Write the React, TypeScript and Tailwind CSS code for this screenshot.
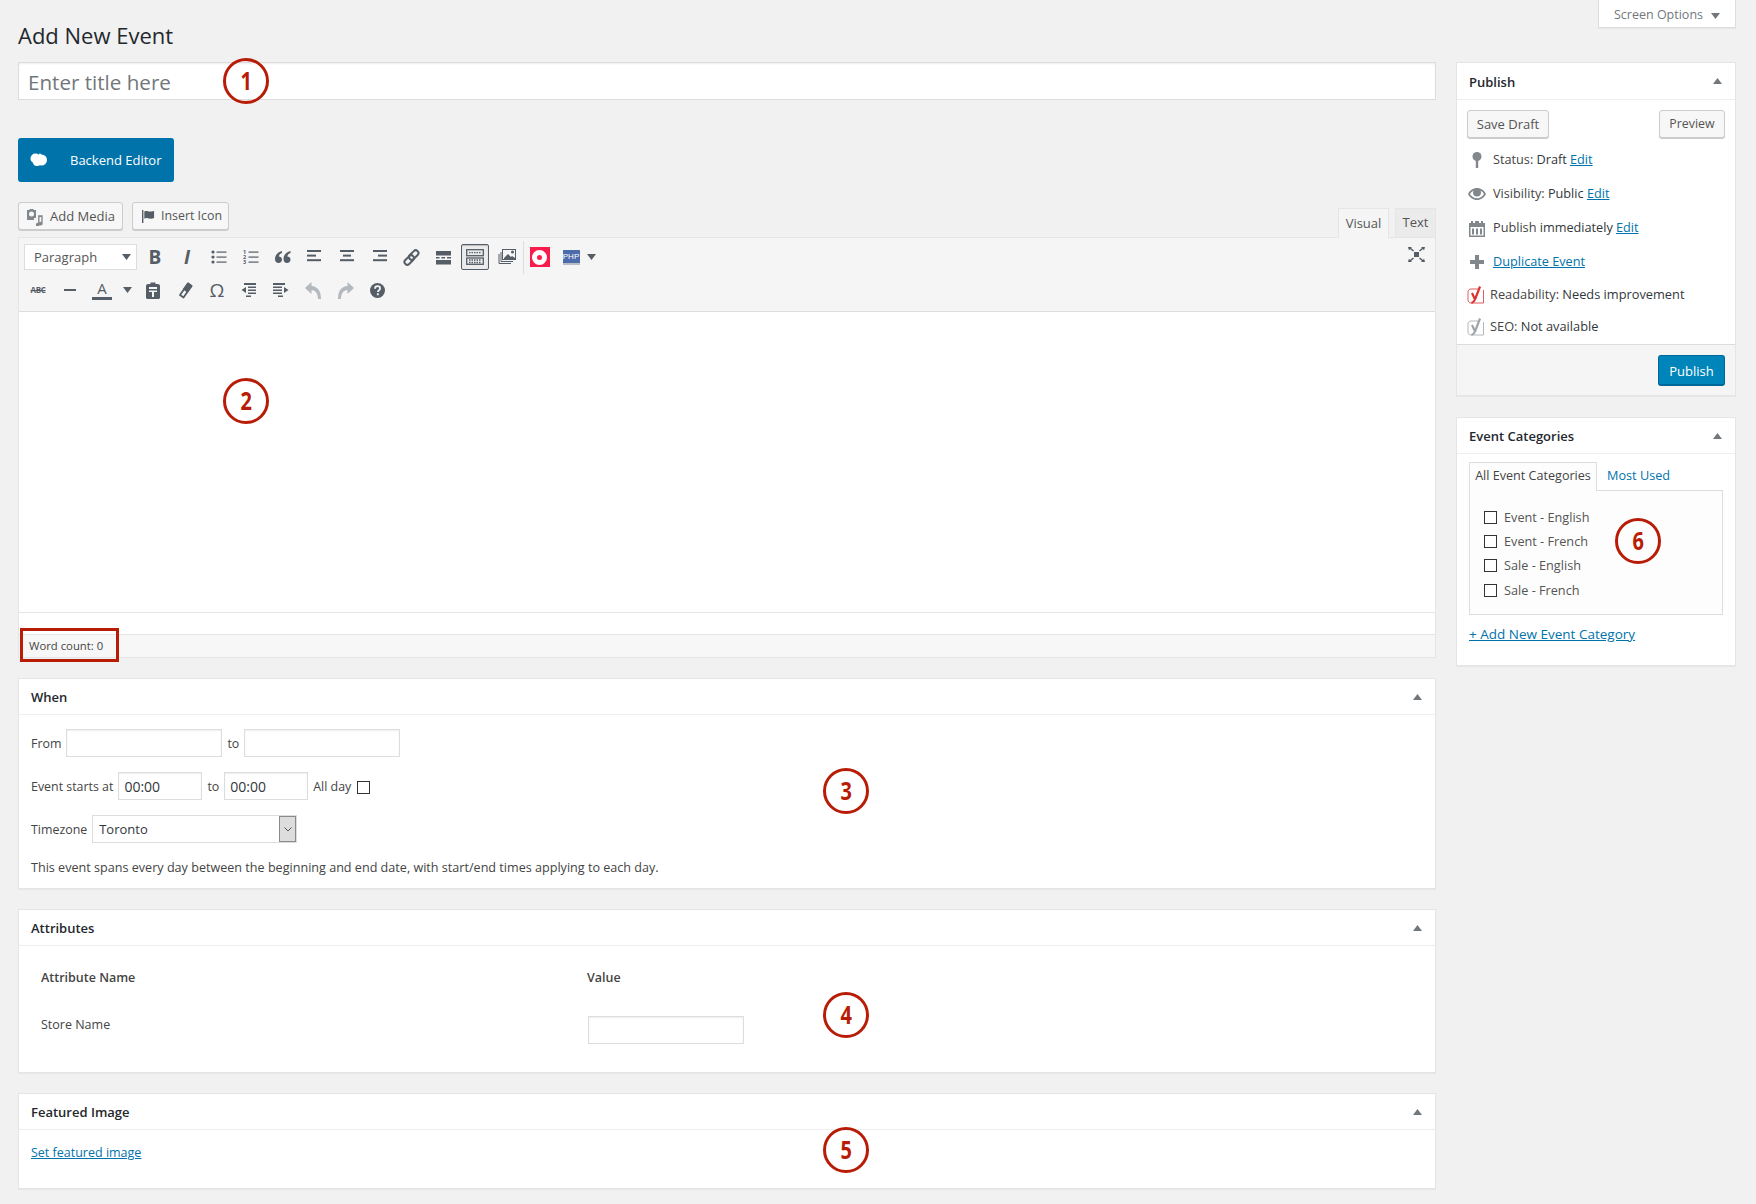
import React from 'react';

const Triangle = ({ down = false, className = 'text-[#72777c]' }: { down?: boolean; className?: string }) => (
  <svg width="9" height="6" viewBox="0 0 9 6" className={className}>
    <polygon points={down ? '0,0 9,0 4.5,6' : '0,6 9,6 4.5,0'} fill="currentColor" />
  </svg>
);

const Tb = ({ w = 'w-[32px]', children }: { w?: string; children: React.ReactNode }) => (
  <div className={`${w} h-[26px] flex items-center justify-center text-[#555d66] shrink-0`}>{children}</div>
);

const Bars = ({ rows }: { rows: [number, number][] }) => (
  <svg width="16" height="16" viewBox="0 0 16 16" fill="currentColor">
    {rows.map(([x, w], i) => (
      <rect key={i} x={x} y={1 + i * 4.6} width={w} height="2" />
    ))}
  </svg>
);

const ListIcon = () => (
  <svg width="16" height="16" viewBox="0 0 16 16" fill="currentColor">
    {[2, 7, 12].map((y) => (
      <g key={y}>
        <circle cx="2" cy={y + 1} r="1.6" />
        <rect x="5.5" y={y + 0.5} width="10" height="1.2" />
      </g>
    ))}
  </svg>
);

const NumList = () => (
  <svg width="16" height="16" viewBox="0 0 16 16" fill="currentColor">
    {[1, 2, 3].map((n) => (
      <g key={n}>
        <text x="0" y={n * 5 - 0.5} fontSize="5.500" fontWeight="700">{n}</text>
        <rect x="5.5" y={n * 5 - 2.5} width="10" height="1.2" />
      </g>
    ))}
  </svg>
);

const Quote = () => (
  <svg width="16" height="14" viewBox="0 0 16 14" fill="currentColor">
    <path d="M7 1C3 2 0 5 0 9c0 2.500 1.500 4 3.500 4S7 11.500 7 9.500 5.500 6.500 3.800 6.500C4 4.800 5.400 3.400 7 3zM15.500 1c-4 1-7 4-7 8 0 2.500 1.500 4 3.500 4s3.500-1.500 3.500-3.500-1.500-3-3.200-3c.2-1.700 1.600-3.100 3.200-3.500z" />
  </svg>
);

const LinkIcon = () => (
  <svg width="17" height="17" viewBox="0 0 17 17" fill="none" stroke="currentColor" strokeWidth="2">
    <rect x="8" y="0.500" width="5.500" height="11" rx="2.700" transform="rotate(45 10.700 6)" />
    <rect x="3.500" y="5.500" width="5.500" height="11" rx="2.700" transform="rotate(45 6.200 11)" />
  </svg>
);

const MoreIcon = () => (
  <svg width="15" height="15" viewBox="0 0 15 15" fill="currentColor">
    <rect x="0" y="1" width="15" height="4.500" />
    <rect x="0" y="7" width="3.500" height="1.500" />
    <rect x="5.500" y="7" width="3.500" height="1.500" />
    <rect x="11" y="7" width="4" height="1.500" />
    <rect x="0" y="10" width="15" height="4.500" />
  </svg>
);

const KitchenSink = () => (
  <svg width="18" height="16" viewBox="0 0 18 16" fill="none" stroke="currentColor" strokeWidth="1.300">
    <rect x="0.700" y="0.700" width="16.600" height="6" />
    <rect x="0.700" y="9" width="16.600" height="6.300" />
    <path d="M3 3.700h12M3 11h12M3 13.500h12" strokeDasharray="1.500 1" />
  </svg>
);

const MediaIcon = () => (
  <svg width="18" height="17" viewBox="0 0 18 17" fill="none" stroke="currentColor" strokeWidth="1">
    <rect x="4.500" y="0.500" width="13" height="10" />
    <path d="M3 3v9.500h12M1 5v9.500h12" />
    <path d="M6 9l4-4 3 3 1-1 3 2v1H6z" fill="currentColor" stroke="none" />
    <circle cx="14.500" cy="3" r="1.500" fill="currentColor" stroke="none" />
  </svg>
);

const Clipboard = () => (
  <svg width="16" height="17" viewBox="0 0 16 17" fill="currentColor">
    <path d="M5.500 2V.500h5V2H13c1 0 2 .8 2 2v11.500c0 .8-.7 1.500-1.500 1.500h-11C1.700 17 1 16.300 1 15.500V4c0-1.200 1-2 2-2zM4 5v2h8V5zm0 3.500v1.500h3v5h2v-5h3V8.500z" />
  </svg>
);

const Eraser = () => (
  <svg width="15" height="17" viewBox="0 0 15 17" fill="none" stroke="currentColor" strokeWidth="1.800" strokeLinejoin="round">
    <path d="M10 1.500l3.500 2.500-8 11.500L2 13z" />
    <path d="M10 1.500l3.500 2.500-4 5.500-3.500-2.500z" fill="currentColor" />
  </svg>
);

const Indent = ({ out = false }: { out?: boolean }) => (
  <svg width="16" height="16" viewBox="0 0 16 16" fill="currentColor">
    {out ? (
      <>
        <rect x="3" y="1" width="12" height="2" />
        <rect x="7" y="4.500" width="8" height="1.500" />
        <rect x="7" y="7.500" width="8" height="1.500" />
        <rect x="7" y="10.500" width="8" height="1.500" />
        <rect x="5" y="13.500" width="5" height="1.500" />
        <polygon points="5,5 5,11 0.500,8" />
      </>
    ) : (
      <>
        <rect x="0" y="1" width="12" height="2" />
        <rect x="0" y="4.500" width="9" height="1.500" />
        <rect x="0" y="7.500" width="9" height="1.500" />
        <rect x="0" y="10.500" width="9" height="1.500" />
        <rect x="5" y="13.500" width="5" height="1.500" />
        <polygon points="11,5 11,11 15.500,8" />
      </>
    )}
  </svg>
);

const UndoIcon = ({ flip = false }: { flip?: boolean }) => (
  <svg width="17" height="17" viewBox="0 0 17 17" fill="#b4b9be" className={flip ? '-scale-x-100' : ''}>
    <path d="M6.500 0v4C12 4.500 16 8 16 17h-3c0-6-2.500-8.500-6.500-9v4L0 6z" />
  </svg>
);

const Help = () => (
  <svg width="15" height="15" viewBox="0 0 15 15">
    <circle cx="7.500" cy="7.500" r="7.500" fill="currentColor" />
    <path d="M5 5.700c0-1.500 1.100-2.500 2.600-2.500s2.500.9 2.500 2.200c0 1.900-2.200 1.900-2.200 3.700" fill="none" stroke="#f5f5f5" strokeWidth="1.800" />
    <rect x="6.900" y="10.300" width="1.900" height="1.900" fill="#f5f5f5" />
  </svg>
);

const Expand = () => (
  <svg width="17" height="15" viewBox="0 0 17 15" fill="currentColor">
    <rect x="6" y="5" width="5" height="5" />
    <path d="M0 0h4L3 1l3 2.500-1 1L2 2 1 3.500zM17 0h-4l1 1-3 2.500 1 1L15 2l1 1.500zM0 15h4l-1-1 3-2.500-1-1L2 13l-1-1.500zM17 15h-4l1-1-3-2.500 1-1 3 2.500 1-1.500z" />
  </svg>
);

const YoastIcon = ({ color, box }: { color: string; box: string }) => (
  <svg width="18" height="19" viewBox="0 0 18 19" fill="none">
    <path d="M11 3H4C2.300 3 1 4.300 1 6v8c0 1.700 1.300 3 3 3h12.500V4" stroke={box} strokeWidth="1" opacity="0.800" />
    <path d="M5 7l3 6.500M13 0.500L8 13.500C7.300 15.500 6.300 16.500 4.500 17" stroke={color} strokeWidth="2.200" />
  </svg>
);

const PinIcon = () => (
  <svg width="10" height="16" viewBox="0 0 10 16" fill="#82878c">
    <circle cx="5" cy="4.500" r="4.500" />
    <rect x="3.800" y="8" width="2.400" height="8" />
  </svg>
);

const EyeIcon = () => (
  <svg width="18" height="12" viewBox="0 0 18 12" fill="#82878c">
    <path fillRule="evenodd" d="M9 0c4 0 7.300 2.400 9 6-1.700 3.600-5 6-9 6S1.700 9.600 0 6c1.700-3.600 5-6 9-6zM2 6c1.500 2.600 4 4.300 7 4.300s5.500-1.700 7-4.300c-.9-1.500-2.100-2.700-3.600-3.500.4.600.6 1.300.6 2a4 4 0 0 1-8 0c0-.7.200-1.400.6-2C4.100 3.300 2.900 4.500 2 6z" />
  </svg>
);

const CalendarIcon = () => (
  <svg width="16" height="17" viewBox="0 0 16 17" fill="#82878c">
    <path fillRule="evenodd" d="M2 1h2v2h2V1h4v2h2V1h2v2h2v14H0V3h2zM1.500 7v8.500h13V7zM3 8.500h2v6H3zm4 0h2v6H7zm4 0h2v6h-2z" />
  </svg>
);

const PlusIcon = () => (
  <svg width="14" height="14" viewBox="0 0 14 14" fill="#82878c">
    <rect x="5" y="0" width="4" height="14" />
    <rect x="0" y="5" width="14" height="4" />
  </svg>
);

const AddMediaIcon = () => (
  <svg width="18" height="18" viewBox="0 0 18 18" fill="#82878c" className="shrink-0">
    <path fillRule="evenodd" d="M1 2h2l1-1h3l1 1h2v8H8v2H1zM5.500 3.500a2.500 2.500 0 1 0 0 5 2.500 2.500 0 0 0 0-5z" />
    <path d="M12 6h5v9.500a2 2 0 1 1-1.500-2V8h-2v8.500a2 2 0 1 1-1.500-2z" transform="scale(0.900) translate(1.500 2)" />
  </svg>
);

const FlagIcon = () => (
  <svg width="13" height="13" viewBox="0 0 14 14" fill="#555d66" className="shrink-0">
    <rect x="0" y="0" width="1.500" height="14" />
    <path d="M2.500 1.500c3-1.500 4.500 1 7.500 0 1-.3 2-.5 3-.5v7.500c-3 1.500-5 .5-7 .3-1.300-.2-2.500 0-3.500.7z" />
  </svg>
);

const BlobIcon = () => (
  <svg width="17" height="14" viewBox="0 0 17 14" fill="#fff">
    <circle cx="5.500" cy="5.500" r="5" />
    <circle cx="11.500" cy="7" r="5.500" />
    <circle cx="7" cy="9" r="4" />
    <circle cx="10" cy="2" r="1.500" />
  </svg>
);

const Box = ({ title, bodyClass, children }: { title: string; bodyClass: string; children: React.ReactNode }) => (
  <div className="bg-white border border-[#e5e5e5] shadow-[0_1px_1px_rgba(0,0,0,0.04)]">
    <div className="h-[35px] border-b border-[#eeeeee] box-content flex items-center justify-between pl-[12px] pr-[13px]">
      <h2 className="text-[13px] font-semibold text-[#23282d] pt-[3px]">{title}</h2>
      <Triangle />
    </div>
    <div className={bodyClass}>{children}</div>
  </div>
);

const Label = ({ children }: { children: React.ReactNode }) => <span className="pt-[2px]">{children}</span>;

const fieldClass = 'h-[28px] border border-[#dddddd] bg-white shadow-[inset_0_1px_2px_rgba(0,0,0,0.07)] text-[14px] text-[#32373c] px-[5px] pt-[1px] outline-none';
const buttonClass = 'h-[28px] px-[9px] pt-px border border-[#cccccc] rounded-[3px] bg-[#f7f7f7] shadow-[0_1px_0_#cccccc] text-[#555555] flex items-center whitespace-nowrap';
const linkClass = 'text-[#0073aa] underline';

const Badge = ({ n, className }: { n: number; className: string }) => (
  <div className={`absolute w-[46px] h-[46px] rounded-full border-[3px] border-[#b81c06] flex items-center justify-center text-[#b81c06] text-[25px] font-bold ${className}`}>
    <span className="inline-block scale-x-[0.8]">{n}</span>
  </div>
);

const StatusRow = ({ icon, children }: { icon: React.ReactNode; children: React.ReactNode }) => (
  <div className="h-[34px] flex items-center text-[12.7px] text-[#444444]">
    <div className="w-[26px] flex justify-center pr-[7px] shrink-0">{icon}</div>
    {children}
  </div>
);

const YoastRow = ({ icon, children }: { icon: React.ReactNode; children: React.ReactNode }) => (
  <div className="h-[32px] flex items-center text-[12.8px] text-[#444444]">
    <div className="w-[23px] flex justify-start shrink-0">{icon}</div>
    {children}
  </div>
);

const App: React.FC = () => {
  return (
    <div className="relative min-h-[1204px] bg-[#f1f1f1] font-['Open_Sans',sans-serif] text-[12.7px] text-[#444444] flex">
      {/* Main column */}
      <main className="w-[1418px] ml-[18px] shrink-0">
        <h1 className="mt-[20px] h-[30px] leading-[30px] text-[22px] text-[#23282d]">Add New Event</h1>
        <input
          placeholder="Enter title here"
          className="mt-[12px] w-full h-[38px] border border-[#dddddd] bg-white px-[9px] pt-[2px] text-[20.6px] outline-none placeholder:text-[#72777c] shadow-[inset_0_1px_2px_rgba(0,0,0,0.07)]"
        />
        <button className="mt-[38px] w-[156px] h-[44px] rounded-[3px] bg-[#0073aa] text-white text-[13px] flex items-center pl-[12px]">
          <BlobIcon />
          <span className="ml-[23px] pt-[2px]">Backend Editor</span>
        </button>

        <div className="mt-[20px] h-[35px] flex justify-between">
          <div className="flex gap-[9px]">
            <button className={`${buttonClass} w-[105px] !px-[7px] gap-[6px] text-[13px]`}>
              <AddMediaIcon />
              Add Media
            </button>
            <button className={`${buttonClass} w-[97px] gap-[6px] text-[12.400px]`}>
              <FlagIcon />
              Insert Icon
            </button>
          </div>
          <div className="flex items-end gap-[6px]">
            <div className="w-[51px] h-[30px] -mb-px relative bg-[#f5f5f5] border border-[#e5e5e5] border-b-0 flex items-center justify-center text-[13px] text-[#555555]">Visual</div>
            <div className="w-[41px] h-[29px] bg-[#ebebeb] border border-[#e5e5e5] border-b-0 flex items-center justify-center text-[13px] text-[#555555]">Text</div>
          </div>
        </div>

        {/* Editor */}
        <div className="h-[421px] border border-[#e5e5e5] flex flex-col bg-white">
          <div className="h-[74px] bg-[#f5f5f5] border-b border-[#dedede] shrink-0 relative">
            <div className="flex items-center h-[26px] mt-[6px] ml-[5px]">
              <div className="w-[113px] h-[26px] bg-white border border-[#dddddd] flex items-center justify-between pl-[9px] pr-[5px] text-[13px] text-[#555555] mr-[2px]">
                <span className="pt-px">Paragraph</span>
                <Triangle down className="text-[#555d66]" />
              </div>
              <Tb><span className="text-[19px] font-bold">B</span></Tb>
              <Tb><span className="text-[19px] font-bold italic">I</span></Tb>
              <Tb><ListIcon /></Tb>
              <Tb><NumList /></Tb>
              <Tb><Quote /></Tb>
              <Tb><Bars rows={[[0, 14], [0, 9], [0, 14], [0, 0]]} /></Tb>
              <Tb><Bars rows={[[1, 14], [4, 8], [1, 14], [0, 0]]} /></Tb>
              <Tb><Bars rows={[[2, 14], [7, 9], [2, 14], [0, 0]]} /></Tb>
              <Tb><LinkIcon /></Tb>
              <Tb><MoreIcon /></Tb>
              <Tb>
                <div className="w-[28px] h-[26px] border border-[#555d66] rounded-[2px] bg-[#ebebeb] shadow-[inset_0_1px_1px_rgba(0,0,0,0.2)] flex items-center justify-center">
                  <KitchenSink />
                </div>
              </Tb>
              <Tb><MediaIcon /></Tb>
              <div className="w-px h-[33px] bg-[#dddddd] shrink-0" />
              <Tb w="w-[31px]">
                <div className="w-[20px] h-[20px] bg-[#f81b4b] flex items-center justify-center">
                  <div className="w-[15px] h-[15px] rounded-full border-[5px] border-white bg-[#f81b4b]" />
                </div>
              </Tb>
              <Tb w="w-[32px]">
                <div className="w-[17px] h-[15px] bg-[#4d6cab] border-b-2 border-[#b8bcc4] text-white text-[8px] leading-[13px] text-center font-['Liberation_Sans',sans-serif]">PHP</div>
              </Tb>
              <div className="flex"><Triangle down className="text-[#555d66]" /></div>
            </div>
            <div className="flex items-center h-[26px] mt-[7px] ml-[3px]">
              <Tb><span className="text-[8px] font-bold line-through tracking-[-0.3px]">ABC</span></Tb>
              <Tb><div className="w-[12px] h-[2px] bg-[#555d66]" /></Tb>
              <Tb>
                <div className="flex flex-col items-center">
                  <span className="text-[15px] leading-[17px]">A</span>
                  <div className="w-[20px] h-[3px] bg-[#555d66]" />
                </div>
              </Tb>
              <Tb w="w-[19px]"><Triangle down className="text-[#555d66]" /></Tb>
              <Tb><Clipboard /></Tb>
              <Tb><Eraser /></Tb>
              <Tb><span className="text-[19px] leading-none">Ω</span></Tb>
              <Tb><Indent out /></Tb>
              <Tb><Indent /></Tb>
              <Tb><UndoIcon /></Tb>
              <Tb><UndoIcon flip /></Tb>
              <Tb><Help /></Tb>
            </div>
            <div className="absolute right-[10px] top-[9px] text-[#555d66]"><Expand /></div>
          </div>
          <div className="flex-1 border-b border-[#e5e5e5]" />
          <div className="h-[21px] shrink-0" />
          <div className="h-[23px] shrink-0 bg-[#f7f7f7] border-t border-[#e5e5e5] flex items-center pl-[10px] text-[11.300px] text-[#444444]">
            Word count: 0
          </div>
        </div>

        <div className="mt-[20px]">
          <Box title="When" bodyClass="h-[173px] px-[12px] pt-[14px] text-[12.400px]">
            <div className="flex items-center gap-[5px]">
              <Label>From</Label>
              <input className={`${fieldClass} w-[156px]`} />
              <Label>to</Label>
              <input className={`${fieldClass} w-[156px]`} />
            </div>
            <div className="mt-[15px] flex items-center gap-[5px]">
              <Label>Event starts at</Label>
              <input defaultValue="00:00" className={`${fieldClass} w-[84px]`} />
              <Label>to</Label>
              <input defaultValue="00:00" className={`${fieldClass} w-[84px]`} />
              <Label>All day</Label>
              <input type="checkbox" className="appearance-none w-[13px] h-[13px] border border-[#333333] bg-white ml-[1px] mt-[2px]" />
            </div>
            <div className="mt-[15px] flex items-center gap-[5px]">
              <Label>Timezone</Label>
              <div className="w-[205px] h-[28px] border border-[#dddddd] bg-white flex items-center justify-between pl-[6px] text-[13px] text-[#32373c]">
                <span className="pt-[2px]">Toronto</span>
                <div className="w-[17px] h-[26px] bg-[#dddddd] border border-[#8a8a8a] flex items-center justify-center">
                  <svg width="8" height="5" viewBox="0 0 8 5" fill="none" stroke="#555555"><path d="M0.500 0.500L4 4l3.500-3.500" /></svg>
                </div>
              </div>
            </div>
            <p className="mt-[16px] leading-[18px] text-[12.600px]">This event spans every day between the beginning and end date, with start/end times applying to each day.</p>
          </Box>
        </div>

        <div className="mt-[20px]">
          <Box title="Attributes" bodyClass="h-[126px] pl-[22px] pt-[23px] text-[12.500px]">
            <div className="grid grid-cols-[546px_1fr] gap-y-[29px] items-start leading-[18px]">
              <div className="font-semibold">Attribute Name</div>
              <div className="font-semibold">Value</div>
              <div>Store Name</div>
              <input className={`${fieldClass} w-[156px] ml-px`} />
            </div>
          </Box>
        </div>

        <div className="mt-[20px]">
          <Box title="Featured Image" bodyClass="h-[58px] pl-[12px] pt-[14px] text-[12.500px]">
            <a className={`${linkClass} leading-[18px] block`}>Set featured image</a>
          </Box>
        </div>
      </main>

      {/* Sidebar */}
      <aside className="w-[280px] ml-[20px] shrink-0">
        <div className="flex justify-end">
          <div className="w-[138px] h-[28px] pt-[4px] bg-white border border-[#dddddd] border-t-0 shadow-[0_1px_1px_rgba(0,0,0,0.04)] flex items-center justify-center gap-[8px] text-[12.500px] text-[#72777c]">
            Screen Options
            <Triangle down className="text-[#72777c]" />
          </div>
        </div>

        <div className="mt-[34px] bg-white border border-[#e5e5e5] shadow-[0_1px_1px_rgba(0,0,0,0.04)]">
          <div className="h-[37px] border-b border-[#eeeeee] flex items-center justify-between pl-[12px] pr-[13px]">
            <h2 className="text-[13px] font-semibold text-[#23282d] pt-[3px]">Publish</h2>
            <Triangle />
          </div>
          <div className="px-[10px] pt-[10px] h-[244px]">
            <div className="flex justify-between">
              <button className={`${buttonClass} w-[82px] justify-center !px-0 text-[13px]`}>Save Draft</button>
              <button className={`${buttonClass} w-[66px] justify-center !px-0 text-[12.400px]`}>Preview</button>
            </div>
            <div className="mt-[5px]">
              <StatusRow icon={<PinIcon />}>Status:&nbsp;<span className="text-[#32373c] font-medium">Draft</span>&nbsp;<a className={linkClass}>Edit</a></StatusRow>
              <StatusRow icon={<EyeIcon />}>Visibility:&nbsp;<span className="text-[#32373c] font-medium">Public</span>&nbsp;<a className={linkClass}>Edit</a></StatusRow>
              <StatusRow icon={<CalendarIcon />}>Publish&nbsp;<span className="text-[#32373c] font-medium">immediately</span>&nbsp;<a className={linkClass}>Edit</a></StatusRow>
              <StatusRow icon={<PlusIcon />}><a className={linkClass}>Duplicate Event</a></StatusRow>
              <YoastRow icon={<YoastIcon color="#dc3232" box="#dc3232" />}>Readability:&nbsp;<span className="text-[#32373c] font-medium">Needs improvement</span></YoastRow>
              <YoastRow icon={<YoastIcon color="#a0a5aa" box="#a0a5aa" />}>SEO:&nbsp;<span className="text-[#32373c] font-medium">Not available</span></YoastRow>
            </div>
          </div>
          <div className="h-[51px] bg-[#f5f5f5] border-t border-[#dddddd] flex justify-end pt-[10px] pr-[10px]">
            <button className="w-[67px] h-[31px] pt-[3px] rounded-[3px] bg-[#0085ba] border border-[#006799] border-b-2 text-white text-[13px]">Publish</button>
          </div>
        </div>

        <div className="mt-[21px] h-[249px] bg-white border border-[#e5e5e5] shadow-[0_1px_1px_rgba(0,0,0,0.04)]">
          <div className="h-[36px] border-b border-[#eeeeee] flex items-center justify-between pl-[12px] pr-[13px]">
            <h2 className="text-[13px] font-semibold text-[#23282d] pt-[2px]">Event Categories</h2>
            <Triangle />
          </div>
          <div className="pl-[12px] pt-[7px]">
            <div className="flex items-end h-[29px]">
              <div className="relative w-[128px] h-[29px] pb-px -mb-px bg-[#fdfdfd] border border-[#dddddd] border-b-0 flex items-center justify-center text-[12.600px] text-[#444444]">All Event Categories</div>
              <a className="ml-[10px] h-[28px] flex items-center text-[#0073aa]">Most Used</a>
            </div>
            <div className="w-[254px] h-[125px] border border-[#dddddd] bg-[#fdfdfd] pl-[14px] pt-[14px]">
              {['Event - English', 'Event - French', 'Sale - English', 'Sale - French'].map((c) => (
                <label key={c} className="h-[24.300px] flex items-center gap-[7px] text-[#555555]">
                  <input type="checkbox" className="appearance-none w-[13px] h-[13px] border border-[#333333] bg-white" />
                  {c}
                </label>
              ))}
            </div>
            <a className={`${linkClass} mt-[10px] block leading-[18px] text-[13.500px]`}>+ Add New Event Category</a>
          </div>
        </div>
      </aside>

      {/* Annotations drawn over the page */}
      <Badge n={1} className="left-[223px] top-[58px]" />
      <Badge n={2} className="left-[223px] top-[378px]" />
      <Badge n={3} className="left-[823px] top-[768px]" />
      <Badge n={4} className="left-[823px] top-[992px]" />
      <Badge n={5} className="left-[823px] top-[1127px]" />
      <Badge n={6} className="left-[1615px] top-[518px]" />
      <div className="absolute left-[20px] top-[628px] w-[99px] h-[34px] border-[3px] border-[#b81c06]" />
    </div>
  );
};

export default App;
